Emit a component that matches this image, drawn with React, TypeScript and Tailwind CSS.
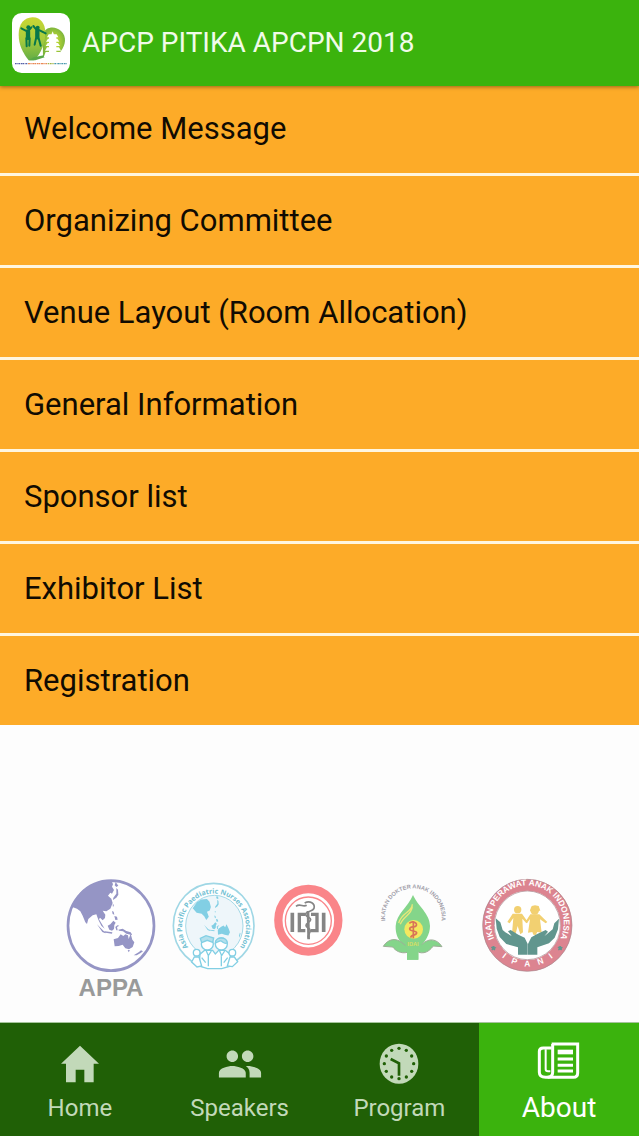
import React from "react";
import clsx from "clsx";
import { MdPeople } from "react-icons/md";

const menuItems = [
  "Welcome Message",
  "Organizing Committee",
  "Venue Layout (Room Allocation)",
  "General Information",
  "Sponsor list",
  "Exhibitor List",
  "Registration",
];

const AppLogo: React.FC = () => (
  <svg viewBox="0 0 174 180" className="w-[58px] h-[60px]" role="img" aria-label="APCP 2018 logo">
    <defs>
      <linearGradient id="heart" x1="0" y1="0" x2="0" y2="1">
        <stop offset="0" stopColor="#c9d733" />
        <stop offset="0.5" stopColor="#a9cc3c" />
        <stop offset="1" stopColor="#62ad45" />
      </linearGradient>
      <radialGradient id="heartSide">
        <stop offset="0.4" stopColor="#b5d433" />
        <stop offset="1" stopColor="#7fb63c" />
      </radialGradient>
    </defs>
    <rect width="174" height="180" rx="29" fill="#fff" />
    <path d="M92 62C102 40 130 38 147 54C166 72 160 97 147 114L138 126L93 133Z" fill="url(#heartSide)" />
    <path d="M20 65C20 31 37 14 61 13C87 12 99 34 100 56C101 87 87 123 66 142H50C34 122 20 96 20 65Z" fill="url(#heart)" />
    <path d="M50 142h20l28-9-3-6-30 6z" fill="#59a946" />
    <g fill="#fff">
      <path d="M122 55l4 10h-8zM110 64h24l5 9h-34zM108 77h28l6 9h-40zM107 90h31l6 9h-43zM105 103h36l6 10h-48zM101 117h43l7 16H95z" />
      <path d="M111 66h22v56h-22z" />
    </g>
    <g stroke="#07774b" strokeLinecap="round" strokeLinejoin="round" fill="none">
      <path d="M28 46l13 7 9 0 8-10M43 76l1 24M53 76l-1 22M64 39l9 11 10 2 18 9M72 76l-4 19M80 76l6 22" strokeWidth="6" />
      <path d="M48 55v20M76 53v20" strokeWidth="13" />
    </g>
    <circle cx="49" cy="43" r="6" fill="#07774b" />
    <circle cx="77" cy="44" r="6" fill="#07774b" />
    <g strokeWidth="4" fill="none">
      <path d="M9 152h37" stroke="#5560a8" strokeDasharray="5 2 3 1" />
      <path d="M48 152h57" stroke="#e98955" strokeDasharray="6 1 4 2" />
      <path d="M107 152h18" stroke="#a3b443" strokeDasharray="5 2" />
      <path d="M127 152h37" stroke="#4899ae" strokeDasharray="5 2 3 1" />
    </g>
  </svg>
);

const asiaPath =
  "M52 111C65 65 108 34 169 30L174 43L171 50L177 60L171 71L166 68L159 77L169 86L173 99L166 116L154 124L143 122L151 134L150 144L143 151L135 143L132 148L141 163L149 176L139 167L130 149L124 133L113 136L100 147L96 162L91 157L83 137L76 124L66 116Z";
const japanPath =
  "M179 46l3-10 8 11-6 4zM184 54l5 5 1 15-6 9-10 7 1-7 9-12zM173 103l4 1-3 8zM171 123l5 2 2 9-5-2zM178 138l8 2 2 9-7 1z";
const indonesiaPath =
  "M126 163l19 19 7 4-1 4-9-4zM150 184l22 3-1 4-19-3zM158 167l8-4 9-11 7 6-4 7-1 12-6 5-8-3zM181 171l6-5 6 1-7 4 2 10h-4zM190 179l13-3 11 7 13 4 5 8-18-4-10-7-12-2z";
const australiaPath =
  "M176 208L189 204L197 193L205 198L211 193L219 196L221 207L227 191L232 209L238 217L233 231L222 238L211 235L203 224L191 228L179 229ZM218 240l7 1-4 6zM258 241l6 3-7 5-12 7-9 0 16-10z";

const AppaLogo: React.FC = () => (
  <svg viewBox="0 0 330 405" className="w-[110px] h-[135px]" role="img" aria-label="APPA">
    <ellipse cx="168" cy="167" rx="129" ry="135" fill="#fff" stroke="#9595c5" strokeWidth="8" />
    <g fill="#9595c5">
      <path d={asiaPath} />
      <path d={japanPath} />
      <path d={indonesiaPath} />
      <path d={australiaPath} />
    </g>
    <text x="168" y="379" textAnchor="middle" fontSize="72" fontWeight="700" fill="#999a9a" className="font-['Liberation_Sans']">
      APPA
    </text>
  </svg>
);

const NursesLogo: React.FC = () => (
  <svg viewBox="0 -15 300 405" className="w-[100px] h-[135px]" role="img" aria-label="Asia Pacific Paediatric Nurses Association">
    <defs>
      <path id="nursesArc" d="M79 228A96 101 0 1 1 215 228" />
    </defs>
    <ellipse cx="146" cy="152" rx="121" ry="127" fill="#fff" stroke="#9fd7e5" strokeWidth="5" />
    <ellipse cx="148" cy="153" rx="86" ry="92" fill="#eef6fa" stroke="#a4d9e7" strokeWidth="3" />
    <g transform="translate(30 37) scale(0.69)" fill="#82cfe4">
      <path d="M77 91L95 65L114 53L139 51L150 63L156 85L151 101L139 106L147 128L136 142L127 126L116 115L94 110Z" />
      <path d={japanPath} />
      <path d={indonesiaPath} />
      <path d="M186 184L199 173L211 166L218 174L224 161L234 181L239 195L232 209L216 206L204 202L187 206Z" />
      <path d="M278 211l4-14 3 4-5 18z" />
    </g>
    <g fill="#fff" stroke="#82cfe4" strokeWidth="4">
      <path d="M102 273l3-35 15-13 23 1 8 11 10-11 20 0 16 13 1 34-28 8H128z" />
      <circle cx="127" cy="207" r="18" />
      <circle cx="169" cy="207" r="18" />
      <path d="M106 190l17-8 23 7-3 13-16-6-17 7zM151 204c0-20 35-20 36 0-12 5-15-8-22-6z" fill="#b3e0ec" />
      <circle cx="95" cy="233" r="10" />
      <circle cx="202" cy="233" r="10" />
      <path d="M80 261l8-15h14l8 27-14 3zM187 273l8-27h13l10 14-16 15z" />
      <path d="M123 226l7 16 9-14M163 226l7 16 9-14M130 241v33M169 241v33M110 248l12 15M188 248l-12 15" fill="none" />
    </g>
    <text fontSize="21" fontWeight="700" fill="#72bfd3" className="font-['Open_Sans']">
      <textPath href="#nursesArc" startOffset="50%" textAnchor="middle">
        Asia Pacific Paediatric Nurses Association
      </textPath>
    </text>
  </svg>
);

const IdiLogo: React.FC = () => (
  <svg viewBox="0 -15 315 405" className="w-[105px] h-[135px]" role="img" aria-label="IDI">
    <ellipse cx="130" cy="136" rx="90" ry="94" fill="#fff" stroke="#fa8589" strokeWidth="25" />
    <ellipse cx="130" cy="137" rx="69" ry="71" fill="none" stroke="#fa8589" strokeWidth="4" />
    <g fill="none" stroke="#858585">
      <path d="M82 113v58M176 113v58" strokeWidth="11" />
      <path d="M121 118H103V167H121M138 118H156V167H138" strokeWidth="10" />
      <path d="M129 108L131 193" strokeWidth="8" />
      <path d="M93 94C106 84 113 98 125 91M119 84C135 75 151 86 147 100C144 110 127 107 122 116C119 125 138 126 137 134C136 143 122 143 123 152C124 160 137 159 136 168C135 176 127 178 130 190" strokeWidth="5" />
    </g>
  </svg>
);

const IdaiLogo: React.FC = () => (
  <svg viewBox="0 -15 315 405" className="w-[105px] h-[135px]" role="img" aria-label="Ikatan Dokter Anak Indonesia">
    <defs>
      <path id="idaiArc" d="M49 151A85 85 0 1 1 211 151" />
    </defs>
    <path d="M129 60C144 94 180 116 180 153C180 180 165 199 151 215L145 226V254H111V226L101 211C84 195 76 178 77 153C79 116 114 97 129 60Z" fill="#84d58a" />
    <path d="M40 214C54 191 79 187 98 205L122 223L113 232C91 237 77 227 68 216ZM216 215C200 190 176 189 157 207L137 223L146 232C170 239 184 220 190 213Z" fill="#84d58a" stroke="#9fae98" strokeWidth="3" />
    <path d="M111 229v25h34v-25l12-22-25 8-27-8z" fill="#84d58a" />
    <path d="M127 88C126 113 96 111 86 144M91 148C99 124 125 120 127 94" fill="none" stroke="#e8e77a" strokeWidth="4" />
    <circle cx="131" cy="163" r="28" fill="#f3e85f" />
    <g fill="none" stroke="#d87458" strokeWidth="5">
      <path d="M130 139v51" />
      <path d="M118 145C128 135 145 145 138 153C132 158 119 153 119 162C120 171 140 165 140 174C138 183 123 178 122 188" />
    </g>
    <text x="129" y="214" textAnchor="middle" fontSize="17" fontWeight="700" fill="#d9de62" className="font-['Liberation_Sans']">
      IDAI
    </text>
    <text fontSize="17" fontWeight="700" fill="#a2a0aa" className="font-['Liberation_Sans']">
      <textPath href="#idaiArc" startOffset="50%" textAnchor="middle">
        IKATAN DOKTER ANAK INDONESIA
      </textPath>
    </text>
  </svg>
);

const IpaniLogo: React.FC = () => (
  <svg viewBox="0 0 330 405" className="w-[110px] h-[135px]" role="img" aria-label="Ikatan Perawat Anak Indonesia, IPANI">
    <defs>
      <path id="ipaniTop" d="M62 213A109 112 0 1 1 252 213" />
      <path id="ipaniBottom" d="M59 240A124 126 0 0 0 256 240" />
    </defs>
    <ellipse cx="157" cy="166" rx="117" ry="121" fill="#fff" stroke="#dc8490" strokeWidth="34" />
    <ellipse cx="157" cy="166" rx="134" ry="138" fill="none" stroke="#a8878d" strokeWidth="2" />
    <ellipse cx="157" cy="166" rx="99" ry="103" fill="none" stroke="#a8878d" strokeWidth="2" />
    <g fill="#f2d071">
      <circle cx="128" cy="119" r="11" />
      <circle cx="179" cy="121" r="13" />
      <path d="M165 123l5-15 10-2 11 2 5 14zM113 131h28l18 26-5 3-12-14 2 41-8 6-8-25-7 26-10-4 4-46-11 16-7-4zM166 133h27l24 23-5 4-17-12 5 40-13-2-5 9-7-1-3-8-13 2 6-41-9 12-5-3z" />
    </g>
    <g fill="#61968e">
      <path d="M62 145L76 157L83 180L91 187L110 198L99 184L107 180L130 194L149 203L158 222V254H129V232L94 222L74 201L65 176Z" />
      <path d="M252 146L238 160L233 178L208 199L219 185L212 180L185 193L169 202L159 222V254H187V232L222 220L239 203L249 178Z" />
      <path d="M56 228l2 4 4 1-3 3 0 4-4-2-4 2 1-5-3-3 4-1zM256 228l2 4 4 1-3 3 0 4-4-2-4 2 1-5-3-3 4-1z" stroke="#61968e" strokeWidth="3" />
    </g>
    <g fontWeight="700" fill="#fff" className="font-['Liberation_Sans']">
      <text fontSize="25">
        <textPath href="#ipaniTop" startOffset="50%" textAnchor="middle">
          IKATAN PERAWAT ANAK INDONESIA
        </textPath>
      </text>
      <text fontSize="25">
        <textPath href="#ipaniBottom" startOffset="50%" textAnchor="middle">
          {"I\u2003P\u2003A\u2003N\u2003I"}
        </textPath>
      </text>
    </g>
  </svg>
);

const HomeIcon: React.FC = () => (
  <svg viewBox="0 0 144 144" className="size-12" fill="currentColor" aria-hidden="true">
    <path d="M72 17L129 71H113V127H85V89H59V127H30V71H15Z" />
  </svg>
);

const clockDots = [
  [72, 25], [94, 31], [110, 48], [116, 71], [110, 94], [94, 111],
  [72, 116], [50, 111], [34, 94], [28, 71], [34, 48], [50, 31],
];

const ClockIcon: React.FC = () => (
  <svg viewBox="0 0 144 144" className="size-12" aria-hidden="true">
    <ellipse cx="72" cy="71" rx="58" ry="60" fill="currentColor" />
    {clockDots.map(([cx, cy]) => (
      <circle key={`${cx}-${cy}`} cx={cx} cy={cy} r="5" fill="#206006" />
    ))}
    <path d="M47 57L72 70V107" fill="none" stroke="#206006" strokeWidth="8" />
  </svg>
);

const PaperIcon: React.FC = () => (
  <svg viewBox="0 0 144 144" className="size-12" fill="none" stroke="currentColor" strokeWidth="9" aria-hidden="true">
    <path d="M50 12H128V99Q128 112 115 112H32Q13 112 13 97V34Q13 24 25 24H50" />
    <path d="M53 12V97Q53 111 38 112" />
    <path d="M32 28V88Q32 94 39 94H46" strokeWidth="6" />
    <path d="M68 36H114" strokeWidth="14" />
    <path d="M68 57H114M68 76H114M68 93H114" />
  </svg>
);

const tabs = [
  { label: "Home", icon: <HomeIcon /> },
  { label: "Speakers", icon: <MdPeople size={46} /> },
  { label: "Program", icon: <ClockIcon /> },
  { label: "About", icon: <PaperIcon /> },
];

export default function App() {
  const activeTab = "About";

  return (
    <div className="min-h-screen flex flex-col bg-[#fdfdfd] font-['Roboto',sans-serif]">
      <header className="relative flex items-center gap-3 h-[86px] px-3 bg-[#3bb30d] shadow-[0_1px_4px_rgba(0,0,0,0.4)]">
        <AppLogo />
        <h1 className="text-[28px] leading-9 text-[#f1fbe9]">APCP PITIKA APCPN 2018</h1>
      </header>

      <ul className="-mt-0.5 flex flex-col gap-[3px] bg-[#fff6e0]">
        {menuItems.map((item) => (
          <li key={item}>
            <button type="button" className="w-full h-[89px] px-6 bg-[#fdab28] text-left text-[31px] leading-10 text-[#110b02]">
              {item}
            </button>
          </li>
        ))}
      </ul>

      <div className="mt-auto pt-12 pb-[17px] flex justify-center">
        <AppaLogo />
        <NursesLogo />
        <IdiLogo />
        <IdaiLogo />
        <IpaniLogo />
      </div>

      <nav className="grid grid-cols-4 border-t border-[#a5c49b]">
        {tabs.map(({ label, icon }) => (
          <button
            key={label}
            type="button"
            aria-current={label === activeTab ? "page" : undefined}
            className={clsx(
              "h-[113px] pt-[17px] flex flex-col items-center",
              label === activeTab ? "bg-[#3bb30d] text-white text-[28px]" : "bg-[#206006] text-[#c2d9b9] text-2xl"
            )}
          >
            <span className="h-12 flex items-center">{icon}</span>
            <span className="h-10 flex items-center">{label}</span>
          </button>
        ))}
      </nav>
    </div>
  );
}
